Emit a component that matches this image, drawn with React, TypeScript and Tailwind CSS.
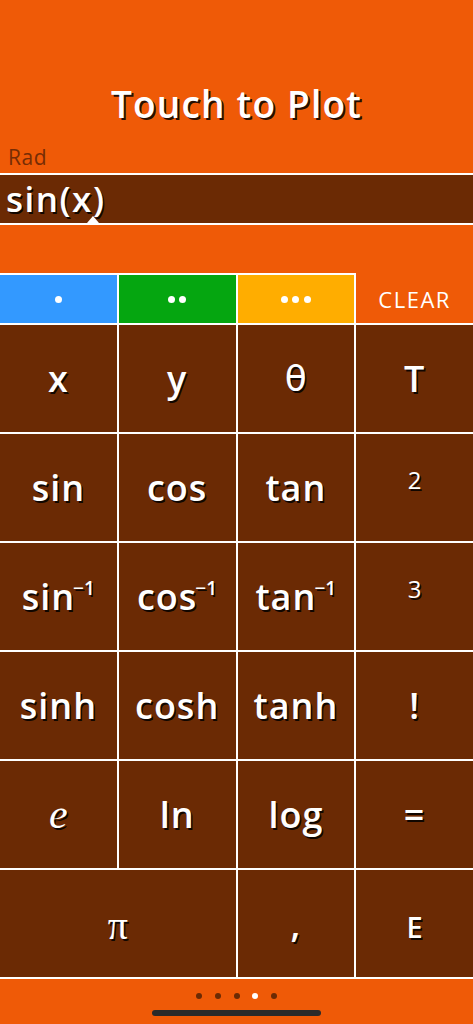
import React from "react";

const SH = "[text-shadow:1.5px_1.5px_0_rgba(0,0,0,0.85)]";

function Key({ children, span2 }: { children: React.ReactNode; span2?: boolean }) {
  return (
    <div
      className={
        "bg-[#6b2a04] flex items-center justify-center text-white " +
        (span2 ? "col-span-2" : "")
      }
    >
      {children}
    </div>
  );
}

function Inv({ base }: { base: string }) {
  return (
    <span className="text-[36px] font-semibold tracking-[1px] [text-shadow:1.5px_1.5px_0_rgba(0,0,0,0.85)] relative">
      {base}
      <span className="text-[19px] font-semibold tracking-normal absolute top-[2px] left-[calc(100%-2px)]">
        −1
      </span>
    </span>
  );
}

export default function App() {
  const big = "text-[36px] font-semibold tracking-[1px] " + SH;
  return (
    <div
      className="w-[473px] h-[1024px] bg-[#ef5a07] flex flex-col overflow-hidden"
      style={{ fontFamily: "'Open Sans', sans-serif" }}
    >
      {/* header */}
      <div className="h-[173px] flex flex-col">
        <div className="pt-[84px] h-[124px] text-center text-white text-[37px] leading-[40px] font-semibold tracking-[1.2px] [text-shadow:2px_2px_0_rgba(0,0,0,0.85)]">
          Touch to Plot
        </div>
        <div className="mt-[22px] pl-[8px] text-[21px] leading-[22px] tracking-[0.5px] text-[#762c05] font-medium">
          Rad
        </div>
      </div>

      {/* input */}
      <div className="h-[52px] border-y-2 border-white bg-[#6b2a04] relative flex items-center pl-[6px]">
        <span className="text-white text-[35px] leading-[40px] font-semibold tracking-[1.5px] [text-shadow:1.5px_1.5px_0_rgba(0,0,0,0.85)]">
          sin(x)
        </span>
        <div className="absolute left-[87px] bottom-0 w-0 h-0 border-l-[6px] border-r-[6px] border-b-[7px] border-l-transparent border-r-transparent border-b-white" />
      </div>

      <div className="h-[48px]" />

      {/* tabs */}
      <div className="h-[50px] grid grid-cols-4 gap-x-[2px] bg-white">
        <div className="mt-[2px] bg-[#3399ff] flex items-center justify-center">
          <span className="w-[7px] h-[7px] rounded-full bg-white" />
        </div>
        <div className="mt-[2px] bg-[#05a610] flex items-center justify-center gap-[4.5px]">
          <span className="w-[7px] h-[7px] rounded-full bg-white" />
          <span className="w-[7px] h-[7px] rounded-full bg-white" />
        </div>
        <div className="mt-[2px] bg-[#ffad00] flex items-center justify-center gap-[4.8px]">
          <span className="w-[7px] h-[7px] rounded-full bg-white" />
          <span className="w-[7px] h-[7px] rounded-full bg-white" />
          <span className="w-[7px] h-[7px] rounded-full bg-white" />
        </div>
        <div className="bg-[#ef5a07] flex items-center justify-center pt-[2px] text-white text-[22px] font-normal tracking-[1.5px]">
          CLEAR
        </div>
      </div>

      {/* keypad */}
      <div className="grid grid-cols-4 grid-rows-[repeat(6,107px)] gap-[2px] bg-white border-y-2 border-white">
        <Key><span className={big}>x</span></Key>
        <Key><span className={big}>y</span></Key>
        <Key><span className={"text-[36px] " + SH} style={{ fontFamily: "'DejaVu Sans', sans-serif" }}>θ</span></Key>
        <Key><span className={big}>T</span></Key>

        <Key><span className={big}>sin</span></Key>
        <Key><span className={big}>cos</span></Key>
        <Key><span className={big}>tan</span></Key>
        <Key><span className={"text-[24px] font-medium -mt-[16px] " + SH}>2</span></Key>

        <Key><span className="-ml-[20px]"><Inv base="sin" /></span></Key>
        <Key><span className="-ml-[20px]"><Inv base="cos" /></span></Key>
        <Key><span className="-ml-[20px]"><Inv base="tan" /></span></Key>
        <Key><span className={"text-[24px] font-medium -mt-[16px] " + SH}>3</span></Key>

        <Key><span className={big}>sinh</span></Key>
        <Key><span className={big}>cosh</span></Key>
        <Key><span className={big}>tanh</span></Key>
        <Key><span className={big}>!</span></Key>

        <Key><span className={"text-[42px] italic " + SH} style={{ fontFamily: "'Liberation Serif', serif" }}>e</span></Key>
        <Key><span className={big}>ln</span></Key>
        <Key><span className={big}>log</span></Key>
        <Key><span className={big}>=</span></Key>

        <Key span2><span className={"text-[40px] mt-[4px] " + SH} style={{ fontFamily: "'Liberation Serif', serif" }}>π</span></Key>
        <Key><span className={big}>,</span></Key>
        <Key><span className={"text-[29px] font-semibold mt-[6px] " + SH}>E</span></Key>
      </div>

      {/* bottom */}
      <div className="flex-1 flex flex-col items-center">
        <div className="mt-[14px] flex gap-[12.6px]">
          <span className="w-[6px] h-[6px] rounded-full bg-[#6b2a04]" />
          <span className="w-[6px] h-[6px] rounded-full bg-[#6b2a04]" />
          <span className="w-[6px] h-[6px] rounded-full bg-[#6b2a04]" />
          <span className="w-[6px] h-[6px] rounded-full bg-white" />
          <span className="w-[6px] h-[6px] rounded-full bg-[#6b2a04]" />
        </div>
        <div className="mt-[11px] w-[169px] h-[6px] rounded-full bg-[#2a2a2a]" />
      </div>
    </div>
  );
}
